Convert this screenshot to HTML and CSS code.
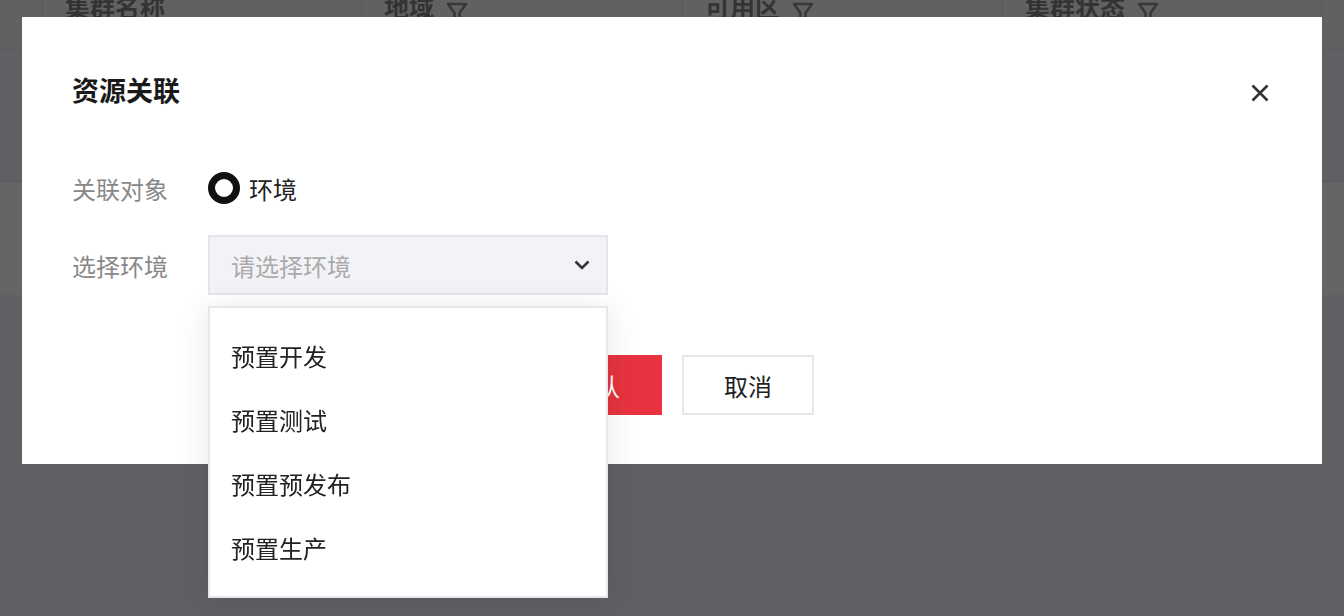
FILE: index.html
```html
<!DOCTYPE html>
<html lang="zh-CN">
<head>
    <meta charset="UTF-8">
    <meta name="viewport" content="width=device-width, initial-scale=1.0">
    <title>资源关联</title>
    <link rel="stylesheet" href="styles.css">
</head>
<body>
    <div class="page">
        <div class="table-head">
            <div class="th th-check"></div>
            <div class="th">集群名称</div>
            <div class="th">地域
                <svg class="filter" width="22" height="24" viewBox="0 0 22 24"><path d="M2 2 H20 L13.5 11 V22 H8.5 V11 Z"/></svg>
            </div>
            <div class="th">可用区
                <svg class="filter" width="22" height="24" viewBox="0 0 22 24"><path d="M2 2 H20 L13.5 11 V22 H8.5 V11 Z"/></svg>
            </div>
            <div class="th">集群状态
                <svg class="filter" width="22" height="24" viewBox="0 0 22 24"><path d="M2 2 H20 L13.5 11 V22 H8.5 V11 Z"/></svg>
            </div>
            <div class="th th-last"></div>
        </div>
        <div class="table-row"></div>
        <div class="table-row table-row-hover"></div>
    </div>

    <div class="modal">
        <div class="modal-header">
            <h2>资源关联</h2>
            <button class="close-btn" type="button">
                <svg width="18" height="18" viewBox="0 0 18 18"><path d="M1.5 1.5 L16.5 16.5 M16.5 1.5 L1.5 16.5"/></svg>
            </button>
        </div>
        <div class="form">
            <div class="form-row">
                <div class="form-label">关联对象</div>
                <label class="radio">
                    <span class="radio-dot"></span>
                    环境
                </label>
            </div>
            <div class="form-row form-row-select">
                <div class="form-label">选择环境</div>
                <div class="select-wrap">
                    <div class="select">
                        <span class="placeholder">请选择环境</span>
                        <svg class="chevron" width="16" height="10" viewBox="0 0 16 10"><path d="M1.5 1.5 L8 8 L14.5 1.5"/></svg>
                    </div>
                    <ul class="dropdown">
                        <li>预置开发</li>
                        <li>预置测试</li>
                        <li>预置预发布</li>
                        <li>预置生产</li>
                    </ul>
                </div>
            </div>
        </div>
        <div class="modal-footer">
            <button class="btn btn-primary" type="button">确认</button>
            <button class="btn" type="button">取消</button>
        </div>
    </div>
</body>
</html>
```

FILE: styles.css
```css
body {
    font-family: "Noto Sans CJK SC", "Noto Sans", sans-serif;
    margin: 0;
    padding: 0;
    height: 100vh;
    overflow: hidden;
    background-color: #5f6063;
}
.page {
    width: 100%;
}
.table-head {
    display: grid;
    grid-template-columns: 43px 319px 321px 320px 319px 1fr;
    height: 70px;
    margin-top: -20px;
    background-color: #616161;
    border-bottom: 1px solid #58595b;
    box-sizing: border-box;
}
.th {
    display: flex;
    align-items: flex-start;
    padding: 14px 0 0 22px;
    font-size: 25px;
    line-height: 25px;
    font-weight: bold;
    color: #333;
    border-right: 1px solid #58595b;
}
.th-check {
    padding: 0;
}
.th-last {
    border-right: none;
}
.filter {
    margin-left: 12px;
    margin-top: 8px;
    flex-shrink: 0;
    fill: none;
    stroke: #383838;
    stroke-width: 2.6;
    stroke-linejoin: round;
}
.table-row {
    height: 132px;
    border-bottom: 1px solid #58595b;
    box-sizing: border-box;
}
.table-row-hover {
    height: 113px;
    background-color: #656565;
    border-bottom: none;
}
.modal {
    position: fixed;
    left: 22px;
    top: 17px;
    width: 1300px;
    height: 447px;
    box-sizing: border-box;
    background: #fff;
    padding: 55px 50px 49px 50px;
}
.modal-header {
    display: flex;
    justify-content: space-between;
    align-items: center;
    height: 36px;
}
.modal-header h2 {
    margin: 0;
    font-size: 27px;
    line-height: 36px;
    font-weight: bold;
    color: #1a1a1a;
}
.close-btn {
    width: 24px;
    height: 24px;
    padding: 3px;
    margin-top: 6px;
    border: none;
    background: none;
    cursor: pointer;
    display: flex;
}
.close-btn svg {
    fill: none;
    stroke: #333;
    stroke-width: 2.6;
}
.form {
    margin-top: 50px;
    display: flex;
    flex-direction: column;
    gap: 17px;
}
.form-row {
    display: flex;
    align-items: center;
    height: 60px;
}
.form-label {
    width: 136px;
    font-size: 24px;
    color: #888;
}
.radio {
    display: flex;
    align-items: center;
    font-size: 24px;
    color: #222;
    cursor: pointer;
}
.radio-dot {
    width: 32px;
    height: 32px;
    border-radius: 50%;
    border: 7px solid #111;
    box-sizing: border-box;
    background: #fff;
    margin-right: 9px;
}
.select-wrap {
    position: relative;
    width: 400px;
}
.select {
    display: flex;
    align-items: center;
    justify-content: space-between;
    height: 60px;
    box-sizing: border-box;
    padding: 0 16px 0 21px;
    background-color: #f2f3f7;
    border: 2px solid #e4e5eb;
    cursor: pointer;
}
.placeholder {
    font-size: 24px;
    color: #aaa;
}
.chevron {
    fill: none;
    stroke: #333;
    stroke-width: 2.6;
}
.dropdown {
    position: absolute;
    top: calc(100% + 11px);
    left: 0;
    width: 400px;
    box-sizing: border-box;
    margin: 0;
    padding: 16px 0;
    list-style: none;
    background: #fff;
    border: 2px solid #e6e6ec;
    box-shadow: 0 4px 30px rgba(0,0,0,0.1);
    z-index: 2;
}
.dropdown li {
    height: 64px;
    line-height: 64px;
    padding-left: 21px;
    font-size: 24px;
    color: #222;
    cursor: pointer;
}
.modal-footer {
    margin-top: 60px;
    display: flex;
    justify-content: center;
    gap: 20px;
}
.btn {
    width: 132px;
    height: 60px;
    box-sizing: border-box;
    border: 2px solid #e6e7ed;
    background: #fff;
    font-family: inherit;
    font-size: 24px;
    color: #222;
    cursor: pointer;
}
.btn-primary {
    background-color: #e6333f;
    border-color: #e6333f;
    color: #fff;
}
```
